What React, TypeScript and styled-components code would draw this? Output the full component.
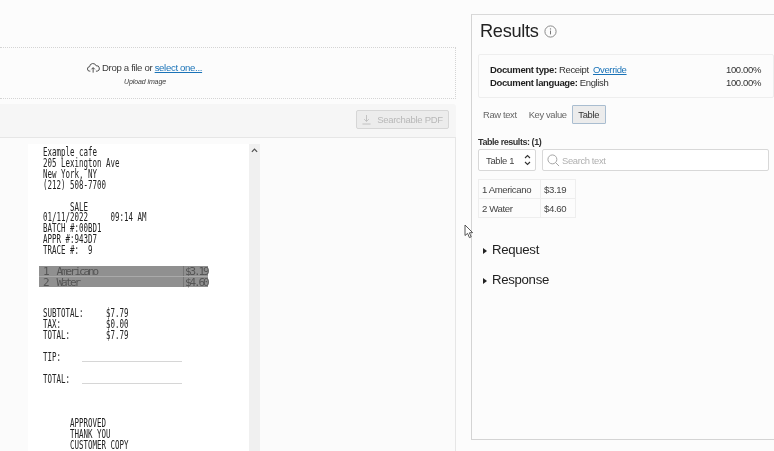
import React from "react";
import styled, { createGlobalStyle } from "styled-components";

const GlobalStyle = createGlobalStyle`
	html, body {
		margin: 0;
		padding: 0;
		background: #fcfcfc;
		font-family: "Liberation Sans", Arial, sans-serif;
	}
`;

const receiptTop = `Example cafe
205 Lexington Ave
New York, NY
(212) 508-7700

      SALE
01/11/2022     09:14 AM
BATCH #:00BD1
APPR #:943D7
TRACE #:  9
`;

const receiptBottom = `SUBTOTAL:     $7.79
TAX:          $0.00
TOTAL:        $7.79

TIP:

TOTAL:



      APPROVED
      THANK YOU
      CUSTOMER COPY`;

const App: React.FC = () => {
	return (
		<Page>
			<GlobalStyle />
			<LeftColumn>
				<DropZone>
					<DropLine>
						<CloudIcon />
						Drop a file or <DropLink href="#">select one...</DropLink>
					</DropLine>
					<DropHint>Upload image</DropHint>
				</DropZone>
				<Toolbar>
					<PdfButton>
						<DownloadIcon />
						Searchable PDF
					</PdfButton>
				</Toolbar>
				<Viewer>
					<Sheet>
						<Receipt>
							<ReceiptText>{receiptTop}</ReceiptText>
							<Highlight>
								<HighlightText>{"1  Americano\n2  Water"}</HighlightText>
								<HighlightPrices>{"$3.19\n$4.60"}</HighlightPrices>
							</Highlight>
							<ReceiptTextLower>{receiptBottom}</ReceiptTextLower>
							<SignLine $top={217} />
							<SignLine $top={239} />
						</Receipt>
					</Sheet>
					<ScrollBar>
						<ScrollArrow viewBox="0 0 8 5">
							<path d="M1 4 L4 1 L7 4" fill="none" stroke="#505050" strokeWidth="1.4" />
						</ScrollArrow>
					</ScrollBar>
				</Viewer>
			</LeftColumn>
			<Cursor viewBox="0 0 10 15">
				<path d="M1 1 L1 11.5 L3.6 9.4 L5.4 13.6 L7.2 12.8 L5.4 8.8 L8.6 8.6 Z" fill="#fff" stroke="#444" strokeWidth="0.9" />
			</Cursor>
			<ResultsPanel>
				<TitleRow>
					<Title>Results</Title>
					<InfoIcon viewBox="0 0 13 13">
						<circle cx="6.5" cy="6.5" r="5.6" fill="none" stroke="#8a8a8a" strokeWidth="1" />
						<path d="M6.5 5.6 V9.4" stroke="#777" strokeWidth="1" />
						<circle cx="6.5" cy="3.9" r="0.7" fill="#777" />
					</InfoIcon>
				</TitleRow>
				<DocBox>
					<DocRow>
						<span>
							<b>Document type:</b> Receipt <DocLink href="#">Override</DocLink>
						</span>
						<span>100.00%</span>
					</DocRow>
					<DocRow>
						<span>
							<b>Document language:</b> English
						</span>
						<span>100.00%</span>
					</DocRow>
				</DocBox>
				<Tabs>
					<Tab>Raw text</Tab>
					<Tab>Key value</Tab>
					<Tab $active>Table</Tab>
				</Tabs>
				<TableLabel>Table results: (1)</TableLabel>
				<Controls>
					<SelectBox>
						Table 1
						<SelectArrows viewBox="0 0 7 12">
							<path d="M1 4 L3.5 1.5 L6 4 M1 8 L3.5 10.5 L6 8" fill="none" stroke="#333" strokeWidth="1.1" />
						</SelectArrows>
					</SelectBox>
					<SearchBox>
						<SearchIcon viewBox="0 0 14 14">
							<circle cx="5.8" cy="5.8" r="4.8" fill="none" stroke="#a0a0a0" strokeWidth="1" />
							<path d="M9.2 9.2 L13 13" stroke="#a0a0a0" strokeWidth="1" />
						</SearchIcon>
						Search text
					</SearchBox>
				</Controls>
				<ResultTable>
					<tbody>
						<tr>
							<NameCell>1 Americano</NameCell>
							<ValueCell>$3.19</ValueCell>
						</tr>
						<tr>
							<NameCell>2 Water</NameCell>
							<ValueCell>$4.60</ValueCell>
						</tr>
					</tbody>
				</ResultTable>
				<Disclosure>
					<Triangle />
					Request
				</Disclosure>
				<Disclosure>
					<Triangle />
					Response
				</Disclosure>
			</ResultsPanel>
		</Page>
	);
};

const CloudIcon: React.FC = () => (
	<CloudSvg viewBox="0 0 14 12">
		<path
			d="M3.6 9.4 H3 A2.4 2.4 0 0 1 2.8 4.6 A3.6 3.6 0 0 1 9.8 3.6 A2.9 2.9 0 0 1 11 9.4 H9.6 M6.6 11 V5.8 M4.8 7.4 L6.6 5.6 L8.4 7.4"
			fill="none"
			stroke="#444"
			strokeWidth="1"
		/>
	</CloudSvg>
);

const DownloadIcon: React.FC = () => (
	<DownloadSvg viewBox="0 0 10 12">
		<path d="M5 1 V8 M2.4 5.6 L5 8.2 L7.6 5.6 M0.5 11 H9.5" fill="none" stroke="#bdbdbd" strokeWidth="1" />
	</DownloadSvg>
);

export default App;

const Page = styled.div`
	position: relative;
	width: 774px;
	height: 451px;
	overflow: hidden;
	display: flex;
	align-items: flex-start;
	background: #fcfcfc;
	color: #2f2f2f;
	filter: blur(0.25px);
`;

const LeftColumn = styled.div`
	width: 456px;
	height: 451px;
	flex: none;
	padding-top: 47px;
	box-sizing: border-box;
	display: flex;
	flex-direction: column;
`;

const DropZone = styled.div`
	height: 52px;
	flex: none;
	box-sizing: border-box;
	border-top: 1px dotted #d4d4d4;
	border-bottom: 1px dotted #d4d4d4;
	border-right: 1px dotted #d4d4d4;
	padding: 14px 0 0 87px;
	display: flex;
	flex-direction: column;
`;

const DropLine = styled.div`
	display: flex;
	align-items: center;
	font-size: 9.6px;
	letter-spacing: -0.33px;
	line-height: 12px;
	color: #3a3a3a;
	white-space: pre;
`;

const CloudSvg = styled.svg`
	width: 13px;
	height: 12px;
	margin-right: 2px;
`;

const DropLink = styled.a`
	color: #1a73b8;
	text-decoration: underline;
`;

const DropHint = styled.div`
	margin: 3px 0 0 37px;
	font-size: 7px;
	letter-spacing: -0.1px;
	line-height: 9px;
	font-style: italic;
	color: #3a3a3a;
`;

const Toolbar = styled.div`
	height: 33px;
	flex: none;
	margin-top: 5px;
	box-sizing: border-box;
	background: #f6f6f6;
	border-radius: 0 3px 0 0;
	padding: 6px 7px 0 0;
	display: flex;
	justify-content: flex-end;
	align-items: flex-start;
`;

const PdfButton = styled.div`
	width: 93px;
	height: 19px;
	box-sizing: border-box;
	border: 1px solid #d6d6d6;
	border-radius: 2px;
	background: #ececec;
	color: #b8b8b8;
	font-size: 9.5px;
	letter-spacing: -0.3px;
	display: flex;
	align-items: center;
	justify-content: center;
	gap: 6px;
	white-space: nowrap;
`;

const DownloadSvg = styled.svg`
	width: 9px;
	height: 11px;
`;

const Viewer = styled.div`
	flex: 1;
	box-sizing: border-box;
	border-top: 1px solid #e6e6e6;
	border-right: 1px solid #e6e6e6;
	background: #fbfbfb;
	padding-left: 28px;
	display: flex;
	align-items: stretch;
`;

const Sheet = styled.div`
	width: 221px;
	margin-top: 6px;
	background: #fff;
	overflow: hidden;
`;

const Receipt = styled.div`
	position: relative;
	padding: 3px 0 0 15px;
`;

const ReceiptText = styled.pre`
	margin: 0;
	font-family: "DejaVu Sans Mono", monospace;
	font-size: 11.5px;
	line-height: 10.9px;
	color: #222;
	transform: scaleX(0.65);
	transform-origin: left top;
	width: 300px;
`;

const ReceiptTextLower = styled(ReceiptText)`
	margin-top: 21px;
	line-height: 11px;
`;

const Highlight = styled.div`
	position: relative;
	margin: 10px 0 0 -4px;
	width: 169px;
	height: 21px;
	display: flex;
	justify-content: space-between;
	background: #909090;

	&::after {
		content: "";
		position: absolute;
		left: 0;
		right: 0;
		top: 10px;
		height: 1px;
		background: #aaa;
	}
`;

const HighlightText = styled.pre`
	margin: 0;
	padding: 1px 0 0 4px;
	font-family: "DejaVu Sans Mono", monospace;
	font-size: 11px;
	line-height: 10.5px;
	letter-spacing: -2.12px;
	color: #555;
`;

const HighlightPrices = styled(HighlightText)`
	width: 25px;
	box-sizing: border-box;
	padding-left: 1px;
	border-left: 1px solid #777;
`;

const SignLine = styled.div<{ $top: number }>`
	position: absolute;
	left: 54px;
	top: ${(props) => props.$top}px;
	width: 100px;
	height: 1px;
	background: #d6d6d6;
`;

const ScrollBar = styled.div`
	width: 11px;
	margin-top: 6px;
	background: #f0f0f0;
	display: flex;
	justify-content: center;
	align-items: flex-start;
	padding-top: 4px;
`;

const ScrollArrow = styled.svg`
	width: 7px;
	height: 5px;
`;

const Cursor = styled.svg`
	position: absolute;
	left: 464px;
	top: 224px;
	width: 10px;
	height: 15px;
`;

const ResultsPanel = styled.div`
	width: 303px;
	height: 426px;
	flex: none;
	margin: 14px 0 0 15px;
	box-sizing: border-box;
	border-top: 1px solid #d9d9d9;
	border-left: 1px solid #d4d4d4;
	border-bottom: 1px solid #d4d4d4;
	padding: 0 0 0 6px;
	background: #fcfcfc;
`;

const TitleRow = styled.div`
	height: 32px;
	margin-bottom: 7px;
	display: flex;
	align-items: center;
	padding-left: 2px;
	gap: 6px;
`;

const Title = styled.div`
	font-size: 18.2px;
	letter-spacing: -0.3px;
	color: #222;
`;

const InfoIcon = styled.svg`
	width: 13px;
	height: 13px;
	margin-top: 1px;
	margin-left: -1px;
`;

const DocBox = styled.div`
	height: 44px;
	box-sizing: border-box;
	border: 1px solid #eeeeee;
	border-radius: 2px;
	padding: 9px 12px 0 11px;
	font-size: 9.5px;
	letter-spacing: -0.36px;
	line-height: 12.5px;
	color: #333;
	width: 296px;

	b {
		color: #1f1f1f;
	}
`;

const DocRow = styled.div`
	display: flex;
	justify-content: space-between;
`;

const DocLink = styled.a`
	color: #1a73b8;
	margin-left: 2px;
	text-decoration: underline;
`;

const Tabs = styled.div`
	display: flex;
	align-items: center;
	margin-top: 7px;
	height: 19px;
	padding-left: 5px;
	gap: 12px;
`;

const Tab = styled.div<{ $active?: boolean }>`
	font-size: 9.4px;
	letter-spacing: -0.35px;
	line-height: 17px;
	color: ${(props) => (props.$active ? "#333" : "#666")};
	${(props) =>
		props.$active &&
		`
		background: #ececec;
		border: 1px solid #a9bdd0;
		border-radius: 1px;
		width: 34px;
		box-sizing: border-box;
		text-align: center;
		margin-left: -7px;
	`}
`;

const TableLabel = styled.div`
	margin-top: 12px;
	font-size: 9px;
	letter-spacing: -0.45px;
	line-height: 12px;
	font-weight: bold;
	color: #333;
`;

const Controls = styled.div`
	display: flex;
	gap: 6px;
	margin-top: 1px;
`;

const SelectBox = styled.div`
	width: 58px;
	height: 22px;
	box-sizing: border-box;
	border: 1px solid #d8d8d8;
	border-radius: 2px;
	background: #fff;
	font-size: 9.4px;
	letter-spacing: -0.3px;
	color: #444;
	display: flex;
	align-items: center;
	justify-content: space-between;
	padding: 0 4px 0 7px;
`;

const SelectArrows = styled.svg`
	width: 7px;
	height: 12px;
`;

const SearchBox = styled.div`
	width: 227px;
	height: 22px;
	box-sizing: border-box;
	border: 1px solid #d8d8d8;
	border-radius: 2px;
	background: #fff;
	font-size: 9.4px;
	letter-spacing: -0.35px;
	color: #b0b0b0;
	display: flex;
	align-items: center;
	padding-left: 4px;
	gap: 2px;
`;

const SearchIcon = styled.svg`
	width: 13px;
	height: 13px;
`;

const ResultTable = styled.table`
	margin-top: 8px;
	border-collapse: collapse;
	table-layout: fixed;
	font-size: 9.6px;
	letter-spacing: -0.38px;
	color: #444;
`;

const NameCell = styled.td`
	border: 1px solid #eeeeee;
	width: 62px;
	height: 19px;
	padding: 0 3px;
	box-sizing: border-box;
`;

const ValueCell = styled(NameCell)`
	width: 35px;
`;

const Disclosure = styled.div`
	display: flex;
	align-items: center;
	font-size: 13.2px;
	letter-spacing: -0.3px;
	line-height: 16px;
	height: 16px;
	color: #222;
	margin: 24px 0 -10px 5px;
	gap: 5px;
`;

const Triangle = styled.span`
	width: 0;
	height: 0;
	margin-top: 2px;
	border-top: 3.5px solid transparent;
	border-bottom: 3.5px solid transparent;
	border-left: 4px solid #222;
`;
